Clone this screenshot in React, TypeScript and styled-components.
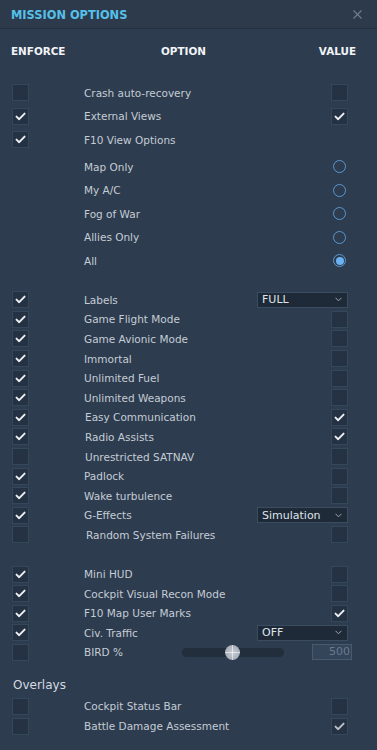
import React from "react";
import styled, { createGlobalStyle } from "styled-components";

const GlobalStyle = createGlobalStyle`
  html, body {
    margin: 0;
    padding: 0;
    background: #2d3c4f;
  }
  body {
    font-family: "DejaVu Sans", "Liberation Sans", sans-serif;
  }
`;

const Panel = styled.div`
  width: 377px;
  height: 750px;
  background: #2d3c4f;
  color: #c5ccd5;
  overflow: hidden;
`;

const Header = styled.div`
  height: 29px;
  display: flex;
  align-items: center;
  justify-content: space-between;
  padding: 1px 15px 0 11px;
  background: #2c3a4c;
  border-bottom: 1px solid #243141;
  box-sizing: border-box;
`;

const Title = styled.div`
  color: #55c0e8;
  font-weight: bold;
  font-size: 11.4px;
`;

const Close = styled.svg`
  width: 9px;
  height: 9px;
`;

const ColumnHeads = styled.div`
  display: grid;
  grid-template-columns: 1fr 1fr 1fr;
  align-items: center;
  height: 44px;
  padding: 0 21px 0 11px;
  color: #f2f4f7;
  font-weight: bold;
  font-size: 10.4px;
`;

const Head = styled.div<{ $align: string }>`
  text-align: ${(p) => p.$align};
`;

const Body = styled.div`
  padding: 8px 29px 0 12px;
`;

const Row = styled.div<{ $h: number; $gap?: number }>`
  display: grid;
  grid-template-columns: 72px 1fr auto;
  align-items: center;
  height: ${(p) => p.$h}px;
  margin-top: ${(p) => p.$gap ?? 0}px;
  font-size: 10.5px;
`;

const Label = styled.div<{ $shift?: number }>`
  padding-left: ${(p) => p.$shift ?? 0}px;
  white-space: nowrap;
`;

const Box = styled.div<{ $dim?: boolean }>`
  width: 15px;
  height: 15px;
  background: #253244;
  border: 1px solid #35475b;
  display: flex;
  align-items: center;
  justify-content: center;
  svg {
    opacity: ${(p) => (p.$dim ? 0.75 : 1)};
  }
`;

const Radio = styled.div<{ $on?: boolean }>`
  width: 11px;
  height: 11px;
  border-radius: 50%;
  border: 1.2px solid #5b98cf;
  margin-right: 2px;
  display: flex;
  align-items: center;
  justify-content: center;
  &::after {
    content: "";
    display: ${(p) => (p.$on ? "block" : "none")};
    width: 8px;
    height: 8px;
    border-radius: 50%;
    background: #6cb2f2;
  }
`;

const Select = styled.div<{ $w: number }>`
  width: ${(p) => p.$w}px;
  height: 16px;
  box-sizing: border-box;
  background: #1f2a38;
  border: 1px solid #3a4c60;
  display: flex;
  align-items: center;
  justify-content: space-between;
  padding: 0 5px 0 4px;
  color: #dfe4ea;
  font-size: 11px;
`;

const Caret = styled.svg`
  width: 7px;
  height: 5px;
`;

const SliderCell = styled.div`
  display: flex;
  align-items: center;
  gap: 28px;
  margin-right: -4px;
`;

const Track = styled.div`
  position: relative;
  width: 102px;
  height: 9px;
  border-radius: 5px;
  background: #222e3c;
`;

const Thumb = styled.div`
  position: absolute;
  top: 50%;
  left: 50px;
  width: 15px;
  height: 15px;
  margin: -7.5px 0 0 -7.5px;
  border-radius: 50%;
  background: radial-gradient(circle at 50% 50%, #c9ced6 0%, #a6aeb9 70%, #8e97a4 100%);
  overflow: hidden;
  &::before,
  &::after {
    content: "";
    position: absolute;
    background: rgba(255, 255, 255, 0.55);
  }
  &::before {
    left: 7px;
    top: 0;
    width: 1px;
    height: 100%;
  }
  &::after {
    top: 7px;
    left: 0;
    height: 1px;
    width: 100%;
  }
`;

const NumBox = styled.div`
  width: 40px;
  height: 16px;
  box-sizing: border-box;
  border: 1px solid #4a5a6d;
  background: #34455a;
  color: #6a7a8e;
  font-size: 11px;
  text-align: right;
  line-height: 14px;
  padding-right: 1px;
`;

const Section = styled.div`
  padding: 16px 0 4px 1px;
  font-size: 12px;
  line-height: 14px;
  color: #d4dae1;
`;

const Check = () => (
  <svg width="11" height="9" viewBox="0 0 11 9">
    <path
      d="M1.5 4.6 L4.2 7.2 L9.6 1.6"
      fill="none"
      stroke="#eef1f4"
      strokeWidth="1.9"
      strokeLinecap="round"
      strokeLinejoin="round"
    />
  </svg>
);

const CheckBox: React.FC<{ on?: boolean; dim?: boolean }> = ({ on, dim }) => (
  <Box $dim={dim}>{on && <Check />}</Box>
);

const Dropdown: React.FC<{ value: string; w?: number }> = ({ value, w = 91 }) => (
  <Select $w={w}>
    <span>{value}</span>
    <Caret viewBox="0 0 7 5">
      <path d="M0.5 0.8 L3.5 3.8 L6.5 0.8" fill="none" stroke="#9aa6b4" strokeWidth="1" />
    </Caret>
  </Select>
);

type Opt = {
  label: string;
  enforce: boolean | null;
  value?: React.ReactNode;
  shift?: number;
};

const top: Opt[] = [
  { label: "Crash auto-recovery", enforce: false, value: <CheckBox /> },
  { label: "External Views", enforce: true, value: <CheckBox on /> },
  { label: "F10 View Options", enforce: true },
];

const radios = ["Map Only", "My A/C", "Fog of War", "Allies Only", "All"];

const mid: Opt[] = [
  { label: "Labels", enforce: true, value: <Dropdown value="FULL" /> },
  { label: "Game Flight Mode", enforce: true, value: <CheckBox /> },
  { label: "Game Avionic Mode", enforce: true, value: <CheckBox /> },
  { label: "Immortal", enforce: true, value: <CheckBox /> },
  { label: "Unlimited Fuel", enforce: true, value: <CheckBox /> },
  { label: "Unlimited Weapons", enforce: true, value: <CheckBox /> },
  { label: "Easy Communication", enforce: true, value: <CheckBox on />, shift: 1 },
  { label: "Radio Assists", enforce: true, value: <CheckBox on />, shift: 1 },
  { label: "Unrestricted SATNAV", enforce: false, value: <CheckBox />, shift: 1 },
  { label: "Padlock", enforce: true, value: <CheckBox /> },
  { label: "Wake turbulence", enforce: true, value: <CheckBox /> },
  { label: "G-Effects", enforce: true, value: <Dropdown value="Simulation" /> },
  { label: "Random System Failures", enforce: false, value: <CheckBox />, shift: 2 },
];

const low: Opt[] = [
  { label: "Mini HUD", enforce: true, value: <CheckBox /> },
  { label: "Cockpit Visual Recon Mode", enforce: true, value: <CheckBox /> },
  { label: "F10 Map User Marks", enforce: true, value: <CheckBox on /> },
  { label: "Civ. Traffic", enforce: true, value: <Dropdown value="OFF" /> },
];

const overlays: Opt[] = [
  { label: "Cockpit Status Bar", enforce: false, value: <CheckBox /> },
  { label: "Battle Damage Assessment", enforce: false, value: <CheckBox on dim /> },
];

const renderRows = (list: Opt[], h: number) =>
  list.map((o) => (
    <Row key={o.label} $h={h}>
      <div>{o.enforce !== null && <CheckBox on={o.enforce} />}</div>
      <Label $shift={o.shift}>{o.label}</Label>
      <div>{o.value}</div>
    </Row>
  ));

export default function App() {
  return (
    <Panel>
      <GlobalStyle />
      <Header>
        <Title>MISSION OPTIONS</Title>
        <Close viewBox="0 0 9 9">
          <path d="M0.5 0.5 L8.5 8.5 M8.5 0.5 L0.5 8.5" stroke="#6f7e90" strokeWidth="1.1" />
        </Close>
      </Header>
      <ColumnHeads>
        <Head $align="left">ENFORCE</Head>
        <Head $align="center">OPTION</Head>
        <Head $align="right">VALUE</Head>
      </ColumnHeads>
      <Body>
        {renderRows(top, 23.5)}
        {radios.map((r, i) => (
          <Row key={r} $h={23.5} $gap={i === 0 ? 3.5 : 0}>
            <div />
            <Label>{r}</Label>
            <Radio $on={r === "All"} />
          </Row>
        ))}
        <Row $h={17.5} />
        {renderRows(mid, 19.6)}
        <Row $h={19.6} />
        {renderRows(low, 19.6)}
        <Row $h={19.6}>
          <div>
            <CheckBox />
          </div>
          <Label $shift={-2}>BIRD %</Label>
          <SliderCell>
            <Track>
              <Thumb />
            </Track>
            <NumBox>500</NumBox>
          </SliderCell>
        </Row>
        <Section>Overlays</Section>
        {renderRows(overlays, 20)}
      </Body>
    </Panel>
  );
}
